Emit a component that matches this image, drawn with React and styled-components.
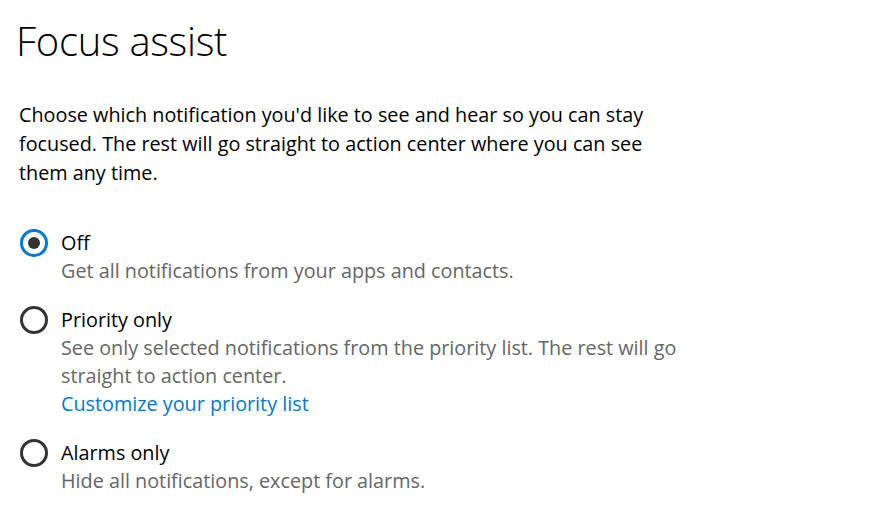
import React from "react";
import styled, { createGlobalStyle } from "styled-components";

const GlobalStyle = createGlobalStyle`
  body {
    margin: 0;
    background: #ffffff;
    font-family: "Open Sans", "Noto Sans", sans-serif;
  }
`;

const Page = styled.div`
  width: 874px;
  height: 517px;
  overflow: hidden;
  padding: 15px 0 0 16px;
  box-sizing: border-box;
`;

const Title = styled.h1`
  margin: 0;
  font-family: "Open Sans", sans-serif;
  font-size: 40px;
  font-weight: 300;
  line-height: 52px;
  color: #000;
  letter-spacing: -0.3px;
`;

const Intro = styled.p`
  margin: 33px 0 0 3px;
  width: 660px;
  font-size: 19.8px;
  line-height: 29px;
  color: #000;
`;

const Options = styled.div`
  display: flex;
  flex-direction: column;
  gap: 21px;
  margin: 42px 0 0 4px;
`;

const Option = styled.label`
  display: grid;
  grid-template-columns: 28px 1fr;
  column-gap: 13px;
  align-items: start;
  cursor: pointer;
`;

const Radio = styled.span`
  width: 28px;
  height: 28px;
  box-sizing: border-box;
  border-radius: 50%;
  border: 3px solid ${(p) => (p.$checked ? "#0078d7" : "#333333")};
  display: flex;
  align-items: center;
  justify-content: center;
  &::after {
    content: "";
    width: 12px;
    height: 12px;
    border-radius: 50%;
    background: #333333;
    display: ${(p) => (p.$checked ? "block" : "none")};
  }
`;

const Body = styled.div`
  display: flex;
  flex-direction: column;
`;

const Label = styled.span`
  font-size: 19.8px;
  line-height: 28px;
  color: #000;
`;

const Hint = styled.span`
  font-size: 19.8px;
  line-height: 28px;
  color: #666666;
  width: 640px;
`;

const Link = styled.a`
  font-size: 19.8px;
  line-height: 28px;
  color: #0078d7;
  text-decoration: none;
  cursor: pointer;
`;

const options = [
  {
    label: "Off",
    hint: "Get all notifications from your apps and contacts.",
  },
  {
    label: "Priority only",
    hint: "See only selected notifications from the priority list. The rest will go straight to action center.",
    link: "Customize your priority list",
  },
  {
    label: "Alarms only",
    hint: "Hide all notifications, except for alarms.",
  },
];

export default function App() {
  const [selected, setSelected] = React.useState(0);
  return (
    <Page>
      <GlobalStyle />
      <Title>Focus assist</Title>
      <Intro>
        Choose which notification you'd like to see and hear so you can stay
        focused. The rest will go straight to action center where you can see
        them any time.
      </Intro>
      <Options>
        {options.map((o, i) => (
          <Option key={o.label} onClick={() => setSelected(i)}>
            <Radio $checked={selected === i} />
            <Body>
              <Label>{o.label}</Label>
              <Hint>{o.hint}</Hint>
              {o.link && <Link>{o.link}</Link>}
            </Body>
          </Option>
        ))}
      </Options>
    </Page>
  );
}
